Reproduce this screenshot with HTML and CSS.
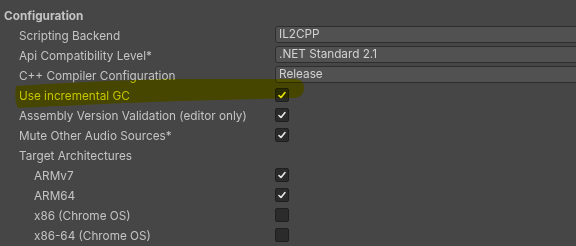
FILE: index.html
```html
<!DOCTYPE html>
<html lang="en">
<head>
    <meta charset="utf-8">
    <title>Player Settings - Configuration</title>
    <link rel="stylesheet" href="styles.css">
</head>
<body>
    <div class="panel">
        <div class="header">Configuration</div>
        <div class="row">
            <div class="label">Scripting Backend</div>
            <div class="value"><div class="field">IL2CPP</div></div>
        </div>
        <div class="row">
            <div class="label">Api Compatibility Level*</div>
            <div class="value"><div class="field">.NET Standard 2.1</div></div>
        </div>
        <div class="row">
            <div class="label">C++ Compiler Configuration</div>
            <div class="value"><div class="field">Release</div></div>
        </div>
        <div class="row">
            <div class="label">Use incremental GC</div>
            <div class="value"><div class="check"><svg class="tick" viewBox="0 0 12 12"><polyline points="3,6.5 5,8.5 9,3.5"/></svg></div></div>
        </div>
        <div class="row">
            <div class="label">Assembly Version Validation (editor only)</div>
            <div class="value"><div class="check"><svg class="tick" viewBox="0 0 12 12"><polyline points="3,6.5 5,8.5 9,3.5"/></svg></div></div>
        </div>
        <div class="row">
            <div class="label">Mute Other Audio Sources*</div>
            <div class="value"><div class="check"><svg class="tick" viewBox="0 0 12 12"><polyline points="3,6.5 5,8.5 9,3.5"/></svg></div></div>
        </div>
        <div class="row">
            <div class="label">Target Architectures</div>
        </div>
        <div class="row sub">
            <div class="label">ARMv7</div>
            <div class="value"><div class="check"><svg class="tick" viewBox="0 0 12 12"><polyline points="3,6.5 5,8.5 9,3.5"/></svg></div></div>
        </div>
        <div class="row sub">
            <div class="label">ARM64</div>
            <div class="value"><div class="check"><svg class="tick" viewBox="0 0 12 12"><polyline points="3,6.5 5,8.5 9,3.5"/></svg></div></div>
        </div>
        <div class="row sub">
            <div class="label">x86 (Chrome OS)</div>
            <div class="value"><div class="check"></div></div>
        </div>
        <div class="row sub">
            <div class="label">x86-64 (Chrome OS)</div>
            <div class="value"><div class="check"></div></div>
        </div>
    </div>
    <svg class="marker" width="576" height="246" viewBox="0 0 576 246">
        <path d="M16,86 C60,83 120,80 180,79 L295,79 Q305,80 304,89 Q303,97 295,98 L180,101 C120,103 60,106 18,108 Q14,100 16,86 Z" fill="#ffff00"/>
    </svg>
</body>
</html>
```

FILE: styles.css
```css
html, body {
    margin: 0;
    height: 100%;
    overflow: hidden;
    background: #464646;
}
body {
    font-family: Inter, "Noto Sans", sans-serif;
    font-size: 11.75px;
    color: #c4c4c4;
}
.panel {
    padding-top: 8px;
}
.header {
    height: 17px;
    line-height: 17px;
    padding-left: 4px;
    font-weight: bold;
}
.row {
    display: flex;
    align-items: center;
    height: 20px;
}
.label {
    width: 256px;
    padding-left: 19px;
    padding-top: 1px;
    white-space: nowrap;
}
.sub .label {
    padding-left: 34px;
    width: 241px;
}
.value {
    flex: 1;
    display: flex;
    align-items: center;
}
.field {
    flex: 1;
    height: 15px;
    line-height: 15px;
    margin-top: -2px;
    margin-right: -4px;
    padding-left: 3px;
    background: #515151;
    border: 1px solid #2e2e2e;
    border-radius: 3px;
    color: #d2d2d2;
}
.check {
    width: 12px;
    height: 12px;
    background: #2b2b2b;
    border: 1px solid #1f1f1f;
    border-radius: 2px;
}
.tick {
    display: block;
    width: 12px;
    height: 12px;
    fill: none;
    stroke: #e8e8e8;
    stroke-width: 1.6;
    stroke-linecap: round;
    stroke-linejoin: round;
}
.marker {
    position: absolute;
    left: 0;
    top: 0;
    mix-blend-mode: multiply;
    pointer-events: none;
}
```
